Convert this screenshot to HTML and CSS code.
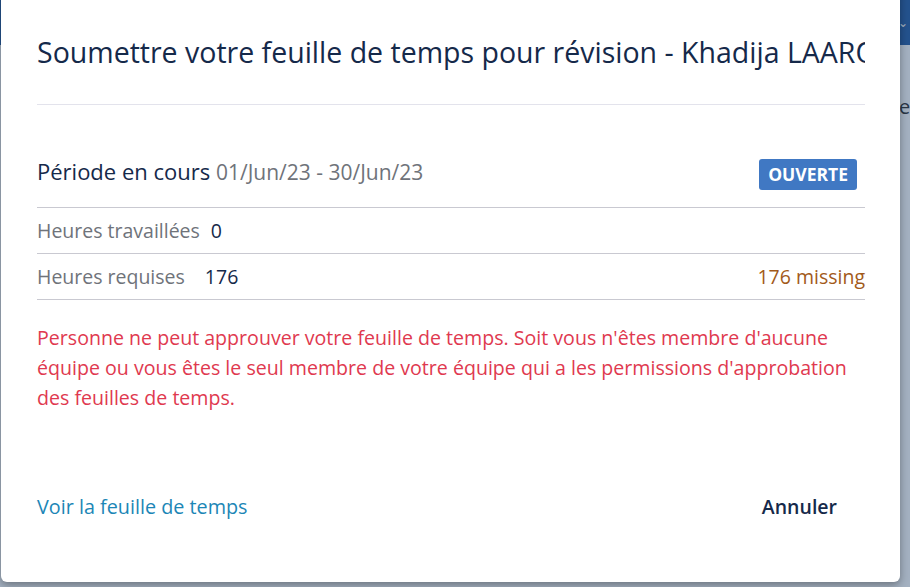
FILE: index.html
```html
<!DOCTYPE html>
<html lang="fr">
<head>
<meta charset="utf-8">
<link rel="stylesheet" href="styles.css">
</head>
<body>
<div class="page">
  <div class="page-header"><span class="caret">&#8964;</span></div>
  <div class="page-sub"></div>
  <div class="page-tab">e</div>
</div>
<div class="backdrop"></div>
<div class="modal">
  <div class="modal-header">
    <h1 class="title">Soumettre votre feuille de temps pour révision - Khadija LAAROUSSI</h1>
  </div>
  <div class="modal-body">
    <div class="period">
      <div class="period-label">Période en cours <span class="dates">01/Jun/23 - 30/Jun/23</span></div>
      <span class="badge">OUVERTE</span>
    </div>
    <div class="row">
      <span class="label">Heures travaillées</span><span class="value v-worked">0</span>
    </div>
    <div class="row">
      <span class="label">Heures requises</span><span class="value v-required">176</span>
      <span class="missing">176 missing</span>
    </div>
    <p class="error">Personne ne peut approuver votre feuille de temps. Soit vous n'êtes membre d'aucune<br>équipe ou vous êtes le seul membre de votre équipe qui a les permissions d'approbation<br>des feuilles de temps.</p>
  </div>
  <div class="modal-footer">
    <a class="link" href="#">Voir la feuille de temps</a>
    <button class="cancel" type="button">Annuler</button>
  </div>
</div>
</body>
</html>
```
FILE: styles.css
```css
* { box-sizing: border-box; }
html, body {
  margin: 0;
  padding: 0;
  width: 910px;
  height: 587px;
  overflow: hidden;
  font-family: "Open Sans", "Noto Sans", sans-serif;
}
body { position: relative; background: #ffffff; }

.page { height: 587px; display: flex; flex-direction: column; }
.page-header {
  height: 45px;
  background: #2a62a8;
  display: flex;
  justify-content: flex-end;
  color: #fff;
}
.caret { font-size: 12px; padding: 14px 2px 0 0; }
.page-sub { height: 26px; border-bottom: 1px solid #ffffff; }
.page-tab { padding: 22px 0 0 899px; font-size: 20px; color: #333; }

.backdrop {
  position: absolute;
  inset: 0;
  background: rgba(28, 60, 100, 0.4);
}

.modal {
  position: absolute;
  left: 1px;
  top: -20px;
  width: 899px;
  height: 602px;
  background: #fff;
  border-radius: 6px;
  box-shadow: 0 3px 8px rgba(0, 0, 0, 0.35);
  padding: 0 35px 0 36px;
  display: flex;
  flex-direction: column;
  color: #1b2a45;
}

.modal-header {
  padding-top: 54px;
  height: 125px;
  border-bottom: 1px solid #e3e3ec;
}
.title {
  margin: 0;
  font-weight: 400;
  font-size: 28.5px;
  line-height: 36px;
  white-space: nowrap;
  overflow: hidden;
  color: #15294a;
}

.modal-body { padding-top: 30px; }
.period {
  display: flex;
  justify-content: space-between;
  align-items: center;
  height: 73px;
  padding: 20px 0 14px;
  border-bottom: 1px solid #c9c9d1;
}
.period-label { font-size: 22px; color: #15294a; line-height: 30px; margin-top: -6px; }
.dates { font-size: 21px; color: #6f737a; }
.badge {
  background: #4078c3;
  color: #fff;
  font-weight: 700;
  font-size: 17.5px;
  padding: 4px 9px;
  margin-right: 8px;
  border-radius: 3px;
  line-height: 23px;
}

.row {
  display: flex;
  align-items: center;
  height: 46px;
  border-bottom: 1px solid #c9c9d1;
  font-size: 19.5px;
}
.label { color: #6f737a; }
.value { color: #15294a; }
.v-worked { margin-left: 11px; }
.v-required { margin-left: 20px; }
.missing { margin-left: auto; color: #a25a1a; }

.error {
  margin: 23px 0 0;
  font-size: 19.6px;
  line-height: 30px;
  color: #e0394f;
  white-space: nowrap;
}

.modal-footer {
  margin-top: auto;
  height: 88px;
  display: flex;
  justify-content: space-between;
  align-items: flex-start;
}
.link {
  font-size: 19.8px;
  color: #1c86b6;
  text-decoration: none;
  line-height: 26px;
}
.cancel {
  border: 0;
  background: none;
  font-family: inherit;
  font-size: 19.5px;
  font-weight: 600;
  color: #15294a;
  padding: 0 28px 0 0;
  line-height: 26px;
}
```
